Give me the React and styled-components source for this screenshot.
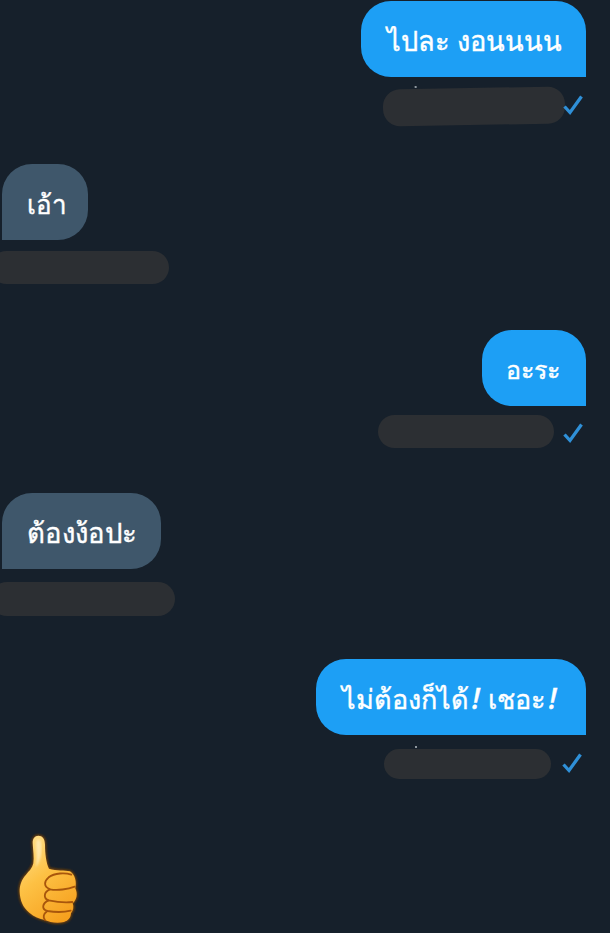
import React from 'react';
import styled, { createGlobalStyle } from 'styled-components';

const GlobalStyle = createGlobalStyle`
  html, body {
    margin: 0;
    padding: 0;
    background: #16202b;
  }
`;

const Page = styled.div`
  width: 610px;
  height: 933px;
  overflow: hidden;
  padding: 1px 24px 0 2px;
  box-sizing: border-box;
  display: flex;
  flex-direction: column;
  background: #16202b;
  font-family: "Noto Sans", "DejaVu Sans", "Liberation Sans", sans-serif;
`;

const Message = styled.div`
  height: ${(p) => p.$height}px;
  flex: none;
  display: flex;
  flex-direction: column;
  align-items: ${(p) => (p.$mine ? 'flex-end' : 'flex-start')};
`;

const Bubble = styled.div`
  width: ${(p) => p.$width}px;
  height: 76px;
  box-sizing: border-box;
  padding: 4px 0 0 ${(p) => p.$left}px;
  display: flex;
  align-items: center;
  color: #fff;
  font-size: ${(p) => p.$size}px;
  font-weight: 500;
  -webkit-text-stroke: 0.4px #fff;
  white-space: pre;
  background: ${(p) => (p.$mine ? '#1d9ff5' : '#3f576b')};
  border-radius: ${(p) => (p.$mine ? '30px 30px 0 30px' : '30px 30px 30px 0')};
`;

const Label = styled.span`
  display: block;
`;

const Slanted = styled.span`
  font-style: italic;
  font-size: 29px;
  margin: 0 1px 0 3px;
`;

const Meta = styled.div`
  margin-top: ${(p) => p.$top}px;
  margin-left: ${(p) => p.$left || 0}px;
  margin-right: ${(p) => p.$right || 0}px;
  display: flex;
  align-items: center;
`;

const Redaction = styled.div`
  position: relative;
  width: ${(p) => p.$width}px;
  height: ${(p) => p.$height}px;
  border-radius: 17px;
  background: #2c2f33;
  transform: rotate(${(p) => p.$tilt || 0}deg);

  /* bit of the hidden text that pokes out above the scribble */
  &::before {
    content: '';
    display: ${(p) => (p.$speck ? 'block' : 'none')};
    position: absolute;
    left: ${(p) => p.$speck}px;
    top: -3px;
    width: 2px;
    height: 2px;
    background: #8f979e;
  }
`;

const Check = styled.svg`
  position: relative;
  width: 22px;
  height: 22px;
  margin-left: ${(p) => p.$gap}px;
  flex: none;
  display: block;
  transform: translateY(${(p) => p.$shift}px);
`;

const Sticker = styled.svg`
  width: 110px;
  height: 113px;
  margin-left: -2px;
  flex: none;
  display: block;
`;

const CheckMark = ({ gap, shift }) => (
  <Check $gap={gap} $shift={shift} viewBox="0 0 22 22" fill="none">
    <path d="M2.5 12.5 L8 18.5 L19.5 2.5" stroke="#2f90d8" strokeWidth="3.3" />
  </Check>
);

const HAND =
  'M115 47 C104 47 98 56 98 68 C99 90 103 112 100 130 C96 146 88 152 78 164 C65 178 58 196 59 216 C60 240 68 262 88 278 C102 290 118 296 135 300 C148 307 172 311 192 306 C205 302 212 294 213 280 C220 272 222 260 218 250 C230 240 234 222 226 205 C230 186 226 164 210 154 C195 150 170 153 147 146 C139 130 135 100 135 74 C135 56 127 47 115 47 Z';

const ThumbsUp = () => (
  <Sticker viewBox="0 0 330 339">
    <defs>
      <linearGradient id="skin" x1="0.2" y1="0" x2="0.7" y2="1">
        <stop offset="0" stopColor="#ffdf8a" />
        <stop offset="0.45" stopColor="#fdc144" />
        <stop offset="1" stopColor="#f6a01e" />
      </linearGradient>
      <filter id="soft" x="-10%" y="-10%" width="120%" height="120%">
        <feGaussianBlur stdDeviation="2.5" />
      </filter>
    </defs>
    <path d={HAND} fill="#6e3f0a" stroke="#6e3f0a" strokeWidth="7" filter="url(#soft)" />
    <path d={HAND} fill="url(#skin)" />
    <path
      d="M115 58 C107 60 108 74 109 92 C110 110 111 128 107 142 C117 130 124 112 124 88 C125 70 122 60 115 58 Z"
      fill="#ffeebf"
      opacity="0.75"
      filter="url(#soft)"
    />
    <g fill="none" stroke="#a8560c" strokeWidth="5.5" strokeLinecap="round">
      <path d="M214 164 C196 158 164 158 146 172 C132 184 130 200 150 208 C172 212 204 208 224 200" />
      <path d="M150 208 C130 216 130 236 146 241 C170 246 198 248 217 246" />
      <path d="M146 241 C126 250 124 268 142 273 C166 277 192 277 212 272" />
      <path d="M142 273 C130 282 128 292 135 300" />
    </g>
  </Sticker>
);

const App = () => (
  <Page>
    <GlobalStyle />
    <Message $mine $height={163}>
      <Bubble $mine $width={225} $left={26} $size={27.2}><Label>ไปละ งอนนนน</Label></Bubble>
      <Meta $top={11} $right={2}>
        <Redaction $width={182} $height={37} $tilt={-1} $speck={32} />
        <CheckMark gap={-3} shift={-2} />
      </Meta>
    </Message>
    <Message $height={166}>
      <Bubble $width={86} $left={25} $size={26}><Label>เอ้า</Label></Bubble>
      <Meta $top={11} $left={-12}>
        <Redaction $width={179} $height={33} />
      </Meta>
    </Message>
    <Message $mine $height={163}>
      <Bubble $mine $width={104} $left={24} $size={25}><Label>อะระ</Label></Bubble>
      <Meta $top={9} $right={2}>
        <Redaction $width={176} $height={33} />
        <CheckMark gap={8} shift={1} />
      </Meta>
    </Message>
    <Message $height={166}>
      <Bubble $width={159} $left={25} $size={27.5}><Label>ต้องง้อปะ</Label></Bubble>
      <Meta $top={13} $left={-12}>
        <Redaction $width={185} $height={34} />
      </Meta>
    </Message>
    <Message $mine $height={161}>
      <Bubble $mine $width={270} $left={26} $size={27}>
        <Label>ไม่ต้องก็ได้<Slanted>!</Slanted> เชอะ<Slanted>!</Slanted></Label>
      </Bubble>
      <Meta $top={14} $right={3}>
        <Redaction $width={167} $height={30} $speck={31} />
        <CheckMark gap={10} shift={-1} />
      </Meta>
    </Message>
    <ThumbsUp />
  </Page>
);

export default App;
